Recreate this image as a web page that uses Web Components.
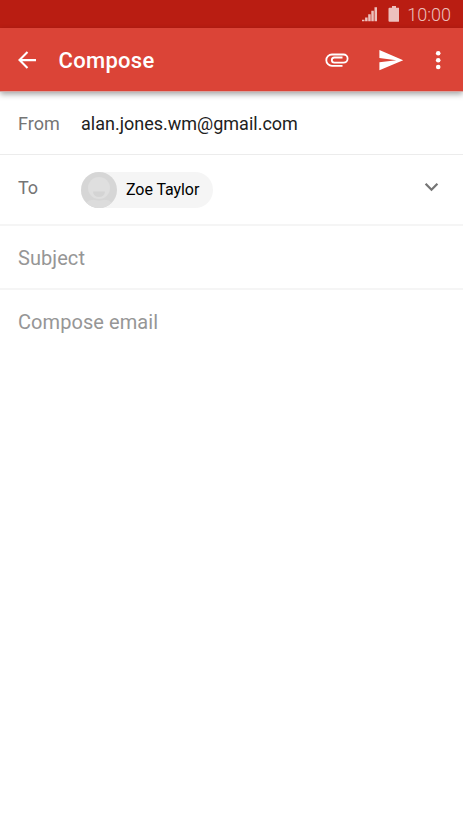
<!DOCTYPE html>
<html lang="en">
<head>
<meta charset="utf-8">
<title>Compose</title>
<style>
html,body{margin:0;height:100%;background:#fff;overflow:hidden}
body{font-family:Roboto,"Noto Sans",sans-serif}
</style>
</head>
<body>
<mail-compose></mail-compose>
<script>
const define = (name, html) => {
  const t = document.createElement('template');
  t.innerHTML = html;
  customElements.define(name, class extends HTMLElement {
    constructor() {
      super();
      this.attachShadow({ mode: 'open' }).append(t.content.cloneNode(true));
    }
  });
};

define('status-bar', `
<style>
:host{display:flex;height:28px;box-sizing:border-box;background:#b91d12;color:#edc0bd;align-items:center;justify-content:flex-end;padding-right:12px;font-size:18px;line-height:28px;font-weight:300}
svg{display:block;fill:#edc0bd}
.signal{margin-right:11px}
.battery{margin-right:8px}
span{padding-top:2px}
</style>
<svg class="signal" width="16" height="16" viewBox="0 0 16 16"><path d="M.5 13.500h2.500V15H.5zM3.600 11.300h2.500V15H3.600zM6.700 8h2.500v7H6.700zM9.800 4.500h2.500V15H9.800zM13 1h2.500v14H13z" transform="translate(.5 .3)"/></svg>
<svg class="battery" width="11" height="16" viewBox="0 0 11 16"><path d="M3.500 0h4v2H10q1 0 1 1v12q0 1-1 1H1q-1 0-1-1V3q0-1 1-1h2.500z" transform="translate(.5 -.3)"/></svg>
<span><slot></slot></span>`);

define('app-bar', `
<style>
:host{display:flex;height:63px;background:#db4437;color:#fff;align-items:center;position:relative;box-shadow:0 1px 0 #d5a5a2,0 3px 6px rgba(0,0,0,.38)}
svg{display:block;flex:none}
h1{margin:0;font-size:22px;letter-spacing:.3px;line-height:28px;font-weight:500;flex:1;padding-top:3px}
.back{margin:0 19.500px 0 16px}
.clip{margin-right:30px}
.send{margin-right:31px}
.more{margin-right:22px}
</style>
<svg class="back" width="23" height="24" viewBox="0 0 23 24"><path d="M20 12.100H4M11.500 4.100 3.500 12.100l8 8" fill="none" stroke="#fff" stroke-width="2.100"/></svg>
<h1><slot></slot></h1>
<svg class="clip" width="24" height="16" viewBox="0 0 24 16"><path d="M17.500 13.400H7A5.700 5.700 0 0 1 7 2H18.500a4.100 4.100 0 0 1 0 8.200H9.400a2.600 2.600 0 0 1 0-5.200H17.500" transform="translate(0 .5)" fill="none" stroke="#fff" stroke-width="1.800"/></svg>
<svg class="send" width="25" height="22" viewBox="0 0 25 22"><path d="M.4 1 24.200 11.200.4 21.300V13.300L17.300 11.200.4 9z" fill="#fff"/></svg>
<svg class="more" width="6" height="20" viewBox="0 0 6 20"><g fill="#fff"><circle cx="3.200" cy="3.300" r="2.300"/><circle cx="3.200" cy="10.200" r="2.300"/><circle cx="3.200" cy="17" r="2.300"/></g></svg>`);

define('form-row', `
<style>
:host{display:flex;box-sizing:border-box;align-items:center;padding:0 24px 0 18px;color:#212121;font-size:18px;line-height:24px;border-bottom:var(--line,2px) solid var(--line-color,#f5f5f5)}
.label{width:63px;flex:none;color:#757575}
.body{flex:1;display:flex;align-items:center;justify-content:space-between}
</style>
<span class="label"><slot name="label"></slot></span><div class="body"><slot></slot></div>`);

define('text-prompt', `
<style>
:host{display:flex;box-sizing:border-box;align-items:center;padding:2px 18px 0;color:#969696;font-size:20px;letter-spacing:.07px;line-height:26px}
:host([line]){border-bottom:2px solid #f5f5f5}
</style>
<slot></slot>`);

define('contact-chip', `
<style>
:host{display:flex;align-items:center;height:36px;width:132px;border-radius:18px;background:#f5f5f5;color:#000;font-size:16px;letter-spacing:-.07px;line-height:20px}
svg{display:block;margin-right:9px}
</style>
<svg width="36" height="36" viewBox="0 0 36 36">
<clipPath id="c"><circle cx="18" cy="18" r="18"/></clipPath>
<g clip-path="url(#c)"><path fill="#d6d6d6" d="M0 0h36v36H0z"/><path fill="#dcdcdc" d="M5 31q4-4 9-3 4 1.500 8 0 5-1 9 3v5H5z"/><circle cx="18" cy="16" r="11" fill="#dfdfdf"/><path fill="#d4d4d4" d="M12 19.500h12a6 5.500 0 0 1-12 0z"/></g></svg>
<span><slot></slot></span>`);

define('expand-button', `
<style>:host{display:block}svg{display:block}</style>
<svg width="15" height="10" viewBox="0 0 15 10"><path d="M1.600 1.800 7.500 7.700 13.400 1.800" fill="none" stroke="#757575" stroke-width="2.300"/></svg>`);

define('mail-compose', `
<style>
:host{display:flex;flex-direction:column;height:100vh;background:#fff}
.from{height:64px;padding-top:3px;--line:1px;--line-color:#ececec}
.to{height:71px;padding-bottom:1px}
.to [slot]{display:block;margin-top:-2px}
contact-chip{margin-top:1px}
expand-button{margin-top:-4px}
.subject{height:64px;padding-top:1px}
.message{height:62px}
</style>
<status-bar>10:00</status-bar>
<app-bar>Compose</app-bar>
<form-row class="from"><span slot="label">From</span>alan.jones.wm@gmail.com</form-row>
<form-row class="to"><span slot="label">To</span><contact-chip>Zoe Taylor</contact-chip><expand-button></expand-button></form-row>
<text-prompt class="subject" line>Subject</text-prompt>
<text-prompt class="message">Compose email</text-prompt>`);
</script>
</body>
</html>
